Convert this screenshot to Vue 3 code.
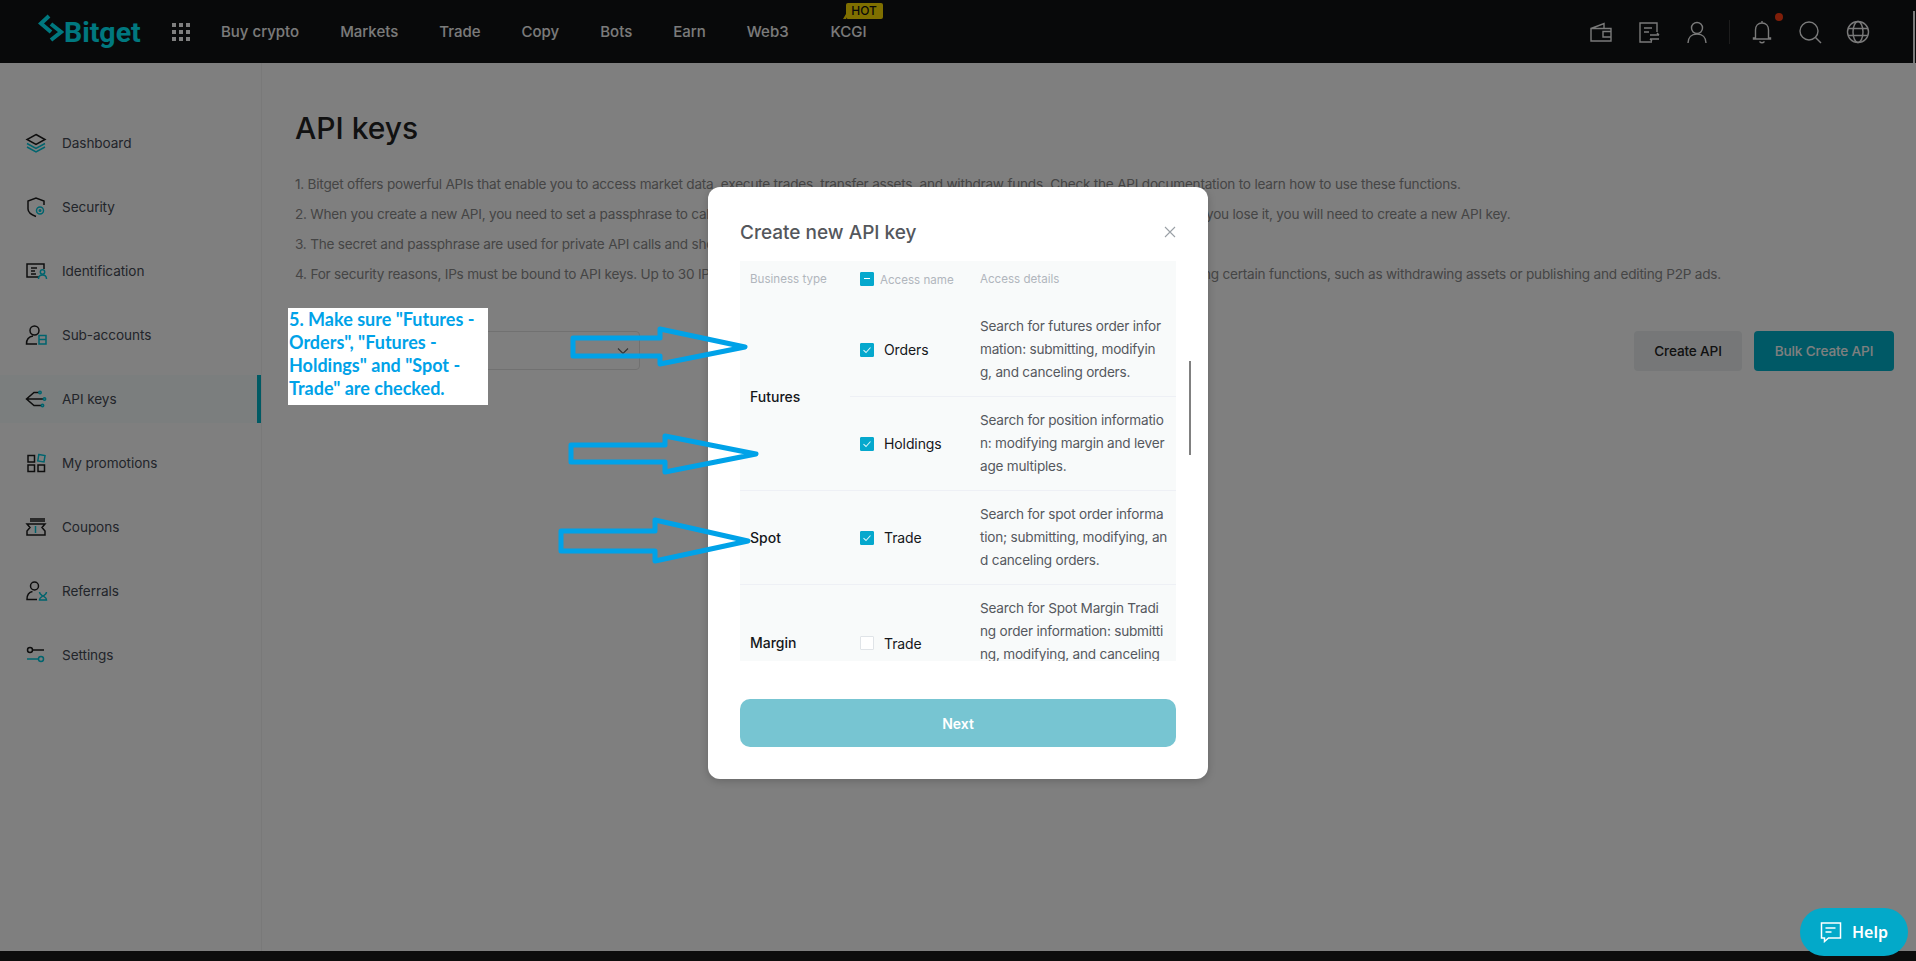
<script setup>
const navItems = ['Buy crypto', 'Markets', 'Trade', 'Copy', 'Bots', 'Earn', 'Web3', 'KCGI'];

const sideItems = [
  {
    label: 'Dashboard',
    dark: '<path d="M12 3.5l9 5-9 5-9-5z"/>',
    teal: '<path d="M3 12.5l9 5 9-5M3 16l9 5 9-5"/>'
  },
  {
    label: 'Security',
    dark: '<path d="M20 10V6l-8-3-8 3v8c0 3 4 6 8 7.500"/>',
    teal: '<circle cx="16" cy="15.500" r="3.500"/><circle cx="16" cy="15.500" r="0.800"/>'
  },
  {
    label: 'Identification',
    dark: '<path d="M15 18H3V5h17v5M7 9h6M7 12h4M7 15h5"/>',
    teal: '<circle cx="18.500" cy="13" r="2.200"/><path d="M14.500 20c0-2.500 1.500-4 4-4s4 1.500 4 4"/>'
  },
  {
    label: 'Sub-accounts',
    dark: '<circle cx="10.500" cy="7.500" r="4.500"/><path d="M9 13c-4 .5-6.500 3.500-6.500 8H13"/>',
    teal: '<path d="M15 12.500h7v4h-7zM15 16.500h7v4.500h-7z"/>'
  },
  {
    label: 'API keys',
    dark: '<path d="M15 5.500h-5L2.500 12l7.500 6.500h7M2.500 12H19"/>',
    teal: '<circle cx="16" cy="5.500" r="1.200"/><circle cx="20.500" cy="12" r="1.200"/><circle cx="18.500" cy="18.500" r="1.200"/>'
  },
  {
    label: 'My promotions',
    dark: '<path d="M4 4.500h6.500V11H4zM4 14h6.500v6.500H4zM14 14h6.500v6.500H14z"/>',
    teal: '<path d="M14.800 3.500l6.200 1-1 6.500-6.200-1z"/>'
  },
  {
    label: 'Coupons',
    dark: '<path d="M6 4h15M6 6h15M3 9h18v0l-3 3.500 3 3.500v4H3v-4l3-3.500L3 9z"/>',
    teal: '<path d="M11.500 11v7"/>'
  },
  {
    label: 'Referrals',
    dark: '<circle cx="10.500" cy="7" r="4"/><path d="M8.500 12.500c-3.500.5-5.500 3.500-5.500 8h10"/>',
    teal: '<path d="M15.500 13c0 3 3 3 3 4s-3 1-3 4h7c0-3-3-3-3-4s3-1 3-4"/>'
  },
  {
    label: 'Settings',
    dark: '<circle cx="6" cy="7" r="2.500"/><path d="M8.500 7H20"/>',
    teal: '<path d="M3 16h11.500"/><circle cx="17" cy="16" r="2.500"/>'
  }
];

const notes = [
  '1. Bitget offers powerful APIs that enable you to access market data, execute trades, transfer assets, and withdraw funds. Check the API documentation to learn how to use these functions.',
  '2. When you create a new API, you need to set a passphrase to call the API. Please keep your passphrase safe and do not share it with anybody. If you lose it, you will need to create a new API key.',
  '3. The secret and passphrase are used for private API calls and should never be shared.',
  '4. For security reasons, IPs must be bound to API keys. Up to 30 IPs can be bound to each key. Keys with no IP have limited access when performing certain functions, such as withdrawing assets or publishing and editing P2P ads.'
];

const groups = [
  {
    type: 'Futures',
    rows: [
      { name: 'Orders', checked: true, lines: ['Search for futures order infor', 'mation: submitting, modifyin', 'g, and canceling orders.'] },
      { name: 'Holdings', checked: true, lines: ['Search for position informatio', 'n: modifying margin and lever', 'age multiples.'] }
    ]
  },
  {
    type: 'Spot',
    rows: [
      { name: 'Trade', checked: true, lines: ['Search for spot order informa', 'tion; submitting, modifying, an', 'd canceling orders.'] }
    ]
  },
  {
    type: 'Margin',
    rows: [
      { name: 'Trade', checked: false, lines: ['Search for Spot Margin Tradi', 'ng order information: submitti', 'ng, modifying, and canceling', 'orders.'] }
    ]
  }
];

const arrows = [
  '573,338 660,338 660,329 745,347 660,364 660,356 573,356',
  '571,445 665,445 665,436 756,454 665,472 665,462 571,462',
  '561,531 655,531 655,520 748,541 655,561 655,551 561,551'
];
</script>

<template>
  <div class="page">
    <header class="topbar">
      <div class="logo">
        <svg class="logo-mark" width="26" height="30" viewBox="0 0 26 30" fill="none" stroke="#00f0ff" stroke-width="4">
          <path d="M11 2L3 9.500 13 18" />
          <path d="M13 10l10 8-10 8" />
        </svg>
        <span class="logo-text">Bitget</span>
      </div>
      <div class="apps">
        <i v-for="n in 9" :key="n"></i>
      </div>
      <nav class="nav">
        <a v-for="item in navItems" :key="item" class="nav-item">
          {{ item }}
          <span v-if="item === 'KCGI'" class="hot">HOT</span>
        </a>
      </nav>
      <div class="tools">
        <svg viewBox="0 0 24 24" class="tool"><path d="M2 21V8.500h20V21zM2 8.500L15 3.500v5M22 11.500h-8v5.500h8" /></svg>
        <svg viewBox="0 0 24 24" class="tool"><path d="M15 22H3V3h17v9M7 8h8M7 12h5M13 15h9M20 13l2 2M22 19h-9M15 21l-2-2" /></svg>
        <svg viewBox="0 0 24 24" class="tool"><circle cx="12" cy="8" r="5.500" /><path d="M3 23c0-5.500 3.500-9 9-9s9 3.500 9 9" /></svg>
        <span class="tool-divider"></span>
        <span class="bell">
          <svg viewBox="0 0 24 24" class="tool"><path d="M12 3c-4 0-6.500 3-6.500 7v8H3.500v1h17v-1h-2v-8c0-4-2.500-7-6.500-7zM12 1v2M9.500 21.500c1.500 1.500 3.500 1.500 5 0" /></svg>
          <i class="dot"></i>
        </span>
        <svg viewBox="0 0 24 24" class="tool"><circle cx="11" cy="11" r="9" /><path d="M17.500 17.500L23 23" /></svg>
        <svg viewBox="0 0 24 24" class="tool"><circle cx="12" cy="12" r="10.500" /><ellipse cx="12" cy="12" rx="5" ry="10.500" /><path d="M2 8.500h20M2 15.500h20" /></svg>
      </div>
    </header>

    <div class="body">
      <aside class="sidebar">
        <a v-for="item in sideItems" :key="item.label" class="side-item" :class="{ active: item.label === 'API keys' }">
          <svg viewBox="0 0 24 24" class="side-icon">
            <g stroke="#1c1c1c" v-html="item.dark"></g>
            <g stroke="#00c8dc" v-html="item.teal"></g>
          </svg>
          <span class="side-label">{{ item.label }}</span>
        </a>
      </aside>

      <main class="content">
        <h1>API keys</h1>
        <p v-for="note in notes" :key="note" class="note">{{ note }}</p>
        <div class="actions">
          <div class="select">
            <svg width="16" height="16" viewBox="0 0 16 16" fill="none" stroke="#666" stroke-width="1.200"><path d="M3 5.500l5 5 5-5" /></svg>
          </div>
          <div class="buttons">
            <button class="btn">Create API</button>
            <button class="btn primary">Bulk Create API</button>
          </div>
        </div>
      </main>
    </div>
    <div class="footer"></div>

    <div class="overlay">
      <section class="modal">
        <div class="modal-head">
          <h2>Create new API key</h2>
          <svg class="close" width="14" height="14" viewBox="0 0 14 14" fill="none" stroke="#9aa0a6" stroke-width="1.100"><path d="M2 2l10 10M12 2L2 12" /></svg>
        </div>
        <div class="table">
          <div class="table-head">
            <span class="col-type">Business type</span>
            <span class="col-access">
              <i class="check minus"></i>
              <span class="access-title">Access name</span>
            </span>
            <span>Access details</span>
          </div>
          <div v-for="group in groups" :key="group.type" class="group">
            <div class="col-type type-name">{{ group.type }}</div>
            <div class="group-rows">
              <div v-for="row in group.rows" :key="row.name" class="row">
                <div class="col-access">
                  <i class="check" :class="{ on: row.checked }">
                    <svg v-if="row.checked" width="14" height="14" viewBox="0 0 14 14" fill="none" stroke="#d8f4f8" stroke-width="1.100"><path d="M3.500 7.200l2.500 2.300 4.500-5" /></svg>
                  </i>
                  <span class="access-name">{{ row.name }}</span>
                </div>
                <div class="details">
                  <div v-for="line in row.lines" :key="line">{{ line }}</div>
                </div>
              </div>
            </div>
          </div>
        </div>
        <button class="next">Next</button>
        <i class="scroll-thumb"></i>
      </section>
    </div>

    <div class="annotation">5. Make sure "Futures - Orders", "Futures - Holdings" and "Spot - Trade" are checked.</div>
    <svg class="arrows" width="1916" height="961" viewBox="0 0 1916 961" fill="none" stroke="#00a2e8" stroke-width="5" stroke-linejoin="round">
      <polygon v-for="points in arrows" :key="points" :points="points" />
    </svg>

    <i class="page-scroll"></i>
    <button class="help">
      <svg width="22" height="22" viewBox="0 0 22 22" fill="none" stroke="#fff" stroke-width="1.500">
        <path d="M1.500 2h19v15h-12l-4 3.500V17h-3zM5.500 7h10M5.500 11h6" />
      </svg>
      Help
    </button>
  </div>
</template>

<style scoped>
.page {
  position: relative;
  width: 1916px;
  height: 961px;
  overflow: hidden;
  display: flex;
  flex-direction: column;
  background: #fff;
  font-family: Inter, "Noto Sans", sans-serif;
}

.topbar {
  height: 63px;
  flex-shrink: 0;
  display: flex;
  align-items: center;
  padding: 0 46px 0 38px;
  background: #101214;
}

.logo {
  display: flex;
  align-items: center;
  width: 134px;
  height: 63px;
}

.logo-mark {
  flex-shrink: 0;
  margin-top: -6px;
}

.logo-text {
  margin-top: 1px;
  font-family: Roboto, sans-serif;
  font-size: 28.500px;
  font-weight: 700;
  color: #00f0ff;
}

.apps {
  width: 18px;
  display: grid;
  grid-template-columns: repeat(3, 4px);
  gap: 3px;
}

.apps i {
  height: 4px;
  background: #fff;
}

.nav {
  display: flex;
  gap: 41px;
  margin-left: 31px;
}

.nav-item {
  position: relative;
  font-size: 15px;
  font-weight: 500;
  color: #f6f6f6;
}

.nav-item:last-child {
  margin-left: 1px;
}

.hot {
  position: absolute;
  left: 15px;
  top: -19px;
  width: 37px;
  height: 16px;
  border-radius: 2px;
  background: #ffdf00;
  color: #111;
  font-size: 12px;
  font-weight: 500;
  line-height: 16px;
  text-align: center;
}

.hot::before {
  content: "";
  position: absolute;
  left: -3px;
  bottom: 0;
  border-right: 3px solid #ffdf00;
  border-top: 5px solid transparent;
}

.tools {
  margin-left: auto;
  display: flex;
  align-items: center;
  gap: 24px;
}

.tool {
  display: block;
  width: 24px;
  height: 24px;
  fill: none;
  stroke: #f4f4f4;
  stroke-width: 1.400;
}

.tool-divider {
  width: 1px;
  height: 24px;
  margin: 0 -4px;
  background: #3a3a3a;
}

.bell {
  position: relative;
}

.dot {
  position: absolute;
  left: 25px;
  top: -7px;
  width: 8px;
  height: 8px;
  border-radius: 50%;
  background: #ff3c12;
}

.body {
  flex: 1;
  display: flex;
  min-height: 0;
}

.sidebar {
  width: 261px;
  flex-shrink: 0;
  padding-top: 56px;
  display: flex;
  flex-direction: column;
  gap: 16px;
  border-right: 1px solid #f2f2f2;
}

.side-item {
  position: relative;
  height: 48px;
  display: flex;
  align-items: center;
  gap: 14px;
  padding-left: 24px;
  font-size: 13.600px;
  letter-spacing: -0.080px;
  color: #454a55;
}

.side-label {
  margin-top: -1px;
}

.side-item.active {
  background: #f7fdfc;
}

.side-item.active::after {
  content: "";
  position: absolute;
  right: 0;
  top: 0;
  width: 4px;
  height: 48px;
  background: #00b4c8;
}

.side-icon {
  width: 24px;
  height: 24px;
  fill: none;
  stroke-width: 1.500;
}

.content {
  flex: 1;
  min-width: 0;
  padding: 45px 22px 0 33px;
}

h1 {
  margin: 0 0 21px;
  font-size: 30px;
  font-weight: 500;
  line-height: 40px;
  color: #222;
}

.note {
  margin: 0;
  font-size: 13.600px;
  letter-spacing: -0.220px;
  line-height: 30px;
  color: #8a8a8a;
  white-space: nowrap;
}

.actions {
  margin-top: 42px;
  display: flex;
  justify-content: space-between;
}

.select {
  width: 345px;
  height: 39px;
  box-sizing: border-box;
  border: 1px solid #e2e2e2;
  border-radius: 4px;
  display: flex;
  align-items: center;
  justify-content: flex-end;
  padding-right: 8px;
}

.buttons {
  display: flex;
  gap: 12px;
}

.btn {
  height: 40px;
  padding: 0;
  width: 108px;
  border: none;
  border-radius: 4px;
  background: #eceff0;
  color: #222;
  font-family: inherit;
  font-size: 13.600px;
  letter-spacing: -0.150px;
  font-weight: 500;
}

.btn.primary {
  width: 140px;
  background: #00b3cc;
  color: #fff;
}

.footer {
  height: 10px;
  flex-shrink: 0;
  background: #1a1a1a;
}

.overlay {
  position: absolute;
  inset: 0;
  display: flex;
  align-items: center;
  justify-content: center;
  padding-top: 5px;
  box-sizing: border-box;
  background: rgba(0, 0, 0, 0.5);
}

.modal {
  position: relative;
  width: 500px;
  box-sizing: border-box;
  padding: 32px;
  border-radius: 12px;
  background: #fff;
  box-shadow: 0 2px 8px rgba(0, 0, 0, 0.2);
}

.modal-head {
  display: flex;
  align-items: center;
  justify-content: space-between;
  margin-bottom: 14px;
}

h2 {
  margin: 0;
  font-size: 19px;
  font-weight: 500;
  line-height: 28px;
  color: #54575c;
}

.close {
  margin-top: -3px;
  margin-right: -1px;
}

.table {
  height: 400px;
  overflow: hidden;
  background: #f8fafa;
  font-size: 14px;
}

.table-head {
  height: 42px;
  display: flex;
  align-items: center;
  padding-bottom: 7px;
  box-sizing: border-box;
  font-size: 11.600px;
  color: #b1b6bd;
}

.col-type {
  width: 110px;
  flex-shrink: 0;
  box-sizing: border-box;
  padding-left: 10px;
}

.col-access {
  width: 130px;
  flex-shrink: 0;
  box-sizing: border-box;
  padding-left: 10px;
  display: flex;
  align-items: center;
}

.access-title {
  margin-left: 6px;
  margin-top: 2px;
}

.check {
  position: relative;
  display: block;
  width: 14px;
  height: 14px;
  box-sizing: border-box;
  border-radius: 1px;
  border: 1px solid #e0e4e8;
  background: #fff;
}

.check svg {
  position: absolute;
  left: -1px;
  top: -1px;
}

.check.on,
.check.minus {
  border-color: #05a8cd;
  background: #05a8cd;
}

.check.minus::after {
  content: "";
  position: absolute;
  left: 3px;
  top: 5px;
  width: 6px;
  height: 1.500px;
  background: #fff;
}

.group {
  display: flex;
  align-items: center;
  border-bottom: 1px solid #eef0f5;
}

.type-name {
  font-weight: 500;
  color: #15171a;
}

.group-rows {
  flex: 1;
}

.row {
  display: flex;
  align-items: center;
  padding: 12px 0;
}

.row + .row {
  border-top: 1px solid #eef0f5;
}

.group:last-child .row {
  padding-bottom: 10px;
}

.access-name {
  margin-left: 10px;
  letter-spacing: -0.100px;
  color: #15171a;
}

.details {
  font-size: 13.600px;
  letter-spacing: -0.220px;
  line-height: 23px;
  color: #55585e;
  white-space: nowrap;
}

.next {
  display: block;
  width: 100%;
  height: 48px;
  margin-top: 38px;
  border: none;
  border-radius: 10px;
  background: #77c5d2;
  color: #fff;
  font-family: inherit;
  font-size: 14px;
  font-weight: 600;
}

.scroll-thumb {
  position: absolute;
  right: 17px;
  top: 174px;
  width: 2px;
  height: 94px;
  background: #808080;
}

.annotation {
  position: absolute;
  left: 288px;
  top: 308px;
  width: 200px;
  height: 97px;
  box-sizing: border-box;
  padding: 0 0 0 1px;
  background: #fff;
  color: #00a2e8;
  font-family: Lato, sans-serif;
  font-size: 18px;
  font-weight: 700;
  line-height: 23px;
}

.arrows {
  position: absolute;
  left: 0;
  top: 0;
  pointer-events: none;
}

.page-scroll {
  position: absolute;
  right: 1px;
  top: 11px;
  width: 2px;
  height: 52px;
  background: #7a7a7a;
}

.help {
  position: absolute;
  right: 8px;
  bottom: 5px;
  width: 108px;
  height: 48px;
  border: none;
  border-radius: 24px;
  display: flex;
  align-items: center;
  justify-content: center;
  gap: 10px;
  background: #03a9c9;
  color: #fff;
  font-family: "Noto Sans", sans-serif;
  font-size: 16px;
  font-weight: 600;
}
</style>
